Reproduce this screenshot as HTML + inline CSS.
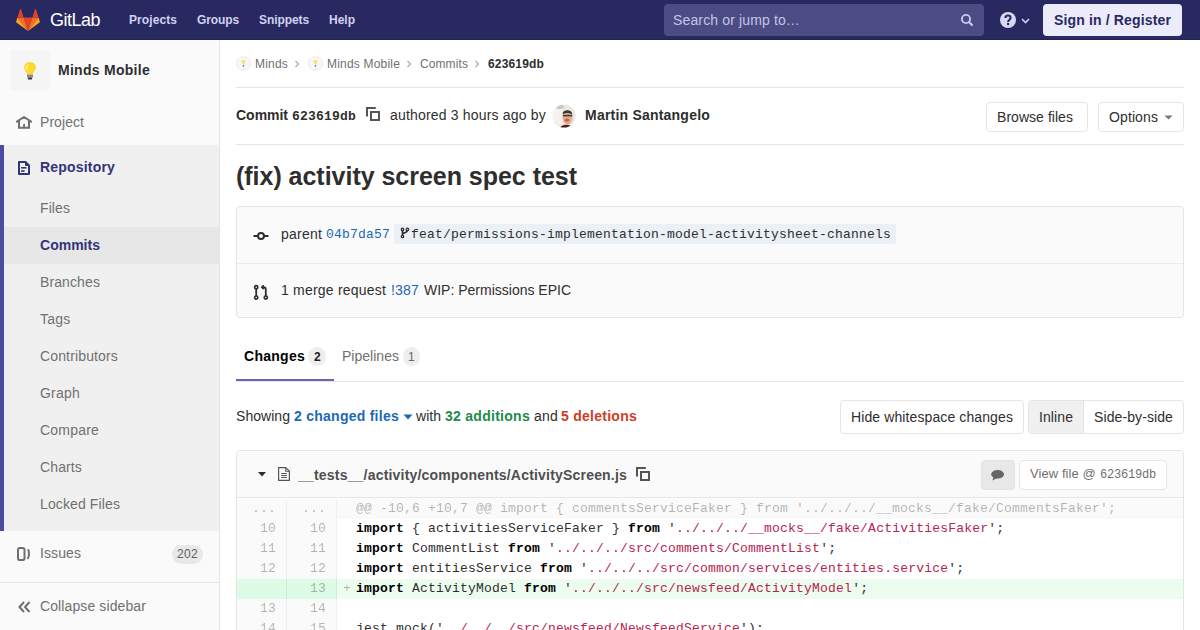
<!DOCTYPE html>
<html><head><meta charset="utf-8">
<style>
*{box-sizing:border-box;margin:0;padding:0}
html,body{width:1200px;height:630px;overflow:hidden;background:#fff;font-family:"Liberation Sans",sans-serif;color:#2e2e2e;font-size:14px}
.a{position:absolute;white-space:pre;line-height:1}
svg{position:absolute;overflow:visible}
.box{position:absolute}
.hl{position:absolute;height:1px;background:#e5e5e5}
.btn{position:absolute;background:#fff;border:1px solid #e5e5e5;border-radius:4px}
.badge{position:absolute;background:#eee;border-radius:10px}
</style></head><body>
<div class="box" style="left:0px;top:0px;width:1200px;height:40px;background:#292961;border-bottom:1px solid #23235c"></div>
<svg style="left:16px;top:9px" width="24" height="22" viewBox="0 0 36 33">
<path fill="#e24329" d="M18 33 L24.6 12.7 H11.4 Z"/>
<path fill="#fc6d26" d="M18 33 L11.4 12.7 H2.2 Z"/>
<path fill="#fca326" d="M2.2 12.7 L0.2 18.9 a1.4 1.4 0 0 0 .5 1.5 L18 33 Z"/>
<path fill="#e24329" d="M2.2 12.7 H11.4 L7.5 0.5 a.7.7 0 0 0 -1.3 0 Z"/>
<path fill="#fc6d26" d="M18 33 L24.6 12.7 H33.8 Z"/>
<path fill="#fca326" d="M33.8 12.7 L35.8 18.9 a1.4 1.4 0 0 1 -.5 1.5 L18 33 Z"/>
<path fill="#e24329" d="M33.8 12.7 H24.6 L28.5 0.5 a.7.7 0 0 1 1.3 0 Z"/>
</svg>
<div class="a" style="left:50px;top:11px;font-size:18px;color:#fff;letter-spacing:-0.5px">GitLab</div>
<div class="a" style="left:129px;top:13.84px;font-size:12px;letter-spacing:0.081px;font-weight:bold;color:#d1d1f0">Projects</div>
<div class="a" style="left:197px;top:13.84px;font-size:12px;letter-spacing:-0.111px;font-weight:bold;color:#d1d1f0">Groups</div>
<div class="a" style="left:259px;top:13.84px;font-size:12px;letter-spacing:-0.084px;font-weight:bold;color:#d1d1f0">Snippets</div>
<div class="a" style="left:329px;top:13.84px;font-size:12px;letter-spacing:-0.001px;font-weight:bold;color:#d1d1f0">Help</div>
<div class="box" style="left:664px;top:4px;width:320px;height:32px;background:#4c4c84;border-radius:4px"></div>
<div class="a" style="left:673px;top:13.15px;font-size:14px;letter-spacing:0.139px;color:#c4c4e4">Search or jump to…</div>
<svg style="left:960px;top:13px" width="14" height="14" viewBox="0 0 14 14"><circle cx="6" cy="6" r="4.1" fill="none" stroke="#c8c8ec" stroke-width="1.9"/><path d="M9 9 L12 12" stroke="#c8c8ec" stroke-width="2.2" stroke-linecap="round"/></svg>
<svg style="left:1000px;top:12px" width="32" height="16" viewBox="0 0 32 16"><circle cx="8" cy="8" r="8" fill="#d8d8f4"/><path d="M5.4 6 C5.4 4.3 6.5 3.5 8 3.5 C9.6 3.5 10.6 4.4 10.6 5.8 C10.6 7.6 8.1 7.8 8.1 10" fill="none" stroke="#292961" stroke-width="2.1"/><rect x="7" y="11" width="2.2" height="2.1" fill="#292961"/><path d="M22 7 L25.5 10.5 L29 7" fill="none" stroke="#d1d1f0" stroke-width="1.6"/></svg>
<div class="box" style="left:1043px;top:4px;width:139px;height:32px;background:#ebebfa;border-radius:4px"></div>
<div class="a" style="left:1054px;top:13.15px;font-size:14px;letter-spacing:0.147px;font-weight:bold;color:#292961">Sign in / Register</div>
<div class="box" style="left:0px;top:40px;width:220px;height:590px;background:#fafafa;border-right:1px solid #e5e5e5"></div>
<div class="box" style="left:10px;top:50px;width:40px;height:40px;background:#f5f5f5;border-radius:4px"></div>
<svg style="left:22px;top:61px" width="16" height="20" viewBox="0 0 16 20">
<path d="M8 1 C3.5 1 1.5 4.5 2.2 7.5 C2.8 10 4.8 11 5 13.5 H11 C11.2 11 13.2 10 13.8 7.5 C14.5 4.5 12.5 1 8 1 Z" fill="#fdd835"/>
<path d="M6 4 C4.5 5 4.3 7 5 8.5" stroke="#fff59d" stroke-width="1.2" fill="none"/>
<rect x="5" y="13.5" width="6" height="3" fill="#8a8a8a"/>
<rect x="5.8" y="16.5" width="4.4" height="2" rx="1" fill="#333"/>
</svg>
<div class="a" style="left:58px;top:63.15px;font-size:14px;letter-spacing:0.278px;font-weight:bold;color:#2e2e2e">Minds Mobile</div>
<svg style="left:16px;top:116px" width="16" height="13" viewBox="0 0 16 13"><path d="M0.9 5.6 L8 1 L15.1 5.6" fill="none" stroke="#707070" stroke-width="2" stroke-linejoin="round" stroke-linecap="round"/><path d="M3 5 V11.7 H13 V5" fill="none" stroke="#707070" stroke-width="2"/><rect x="7.2" y="8" width="1.8" height="4" fill="#707070"/></svg>
<div class="a" style="left:40px;top:115.15px;font-size:14px;letter-spacing:0.061px;color:#707070">Project</div>
<div class="box" style="left:0px;top:145px;width:219px;height:386px;background:#f0f0f0;border-left:4px solid #4b4ba3"></div>
<div class="box" style="left:4px;top:227px;width:215px;height:37px;background:#e7e7e7"></div>
<svg style="left:17px;top:160px" width="14" height="16" viewBox="0 0 14 16"><path d="M2 2 H8.5 L12 5.5 V14 H2 Z" fill="none" stroke="#33337a" stroke-width="2" stroke-linejoin="round"/><path d="M8.5 2 V5.5 H12 Z" fill="#33337a" stroke="#33337a" stroke-width="1"/><rect x="4.1" y="7" width="5.4" height="1.6" fill="#33337a"/><rect x="4.1" y="10.2" width="3.5" height="1.6" fill="#33337a"/></svg>
<div class="a" style="left:40px;top:160.15px;font-size:14px;letter-spacing:0.188px;font-weight:bold;color:#33337a">Repository</div>
<div class="a" style="left:40px;top:201.15px;font-size:14px;letter-spacing:0.088px;color:#707070">Files</div>
<div class="a" style="left:40px;top:238.15px;font-size:14px;letter-spacing:0.015px;font-weight:bold;color:#33337a">Commits</div>
<div class="a" style="left:40px;top:275.15px;font-size:14px;letter-spacing:0.107px;color:#707070">Branches</div>
<div class="a" style="left:40px;top:312.15px;font-size:14px;letter-spacing:0.219px;color:#707070">Tags</div>
<div class="a" style="left:40px;top:349.15px;font-size:14px;letter-spacing:0.145px;color:#707070">Contributors</div>
<div class="a" style="left:40px;top:386.15px;font-size:14px;letter-spacing:0.218px;color:#707070">Graph</div>
<div class="a" style="left:40px;top:423.15px;font-size:14px;letter-spacing:0.203px;color:#707070">Compare</div>
<div class="a" style="left:40px;top:460.15px;font-size:14px;letter-spacing:0.128px;color:#707070">Charts</div>
<div class="a" style="left:40px;top:497.15px;font-size:14px;letter-spacing:0.117px;color:#707070">Locked Files</div>
<svg style="left:17px;top:547px" width="14" height="14" viewBox="0 0 14 14"><rect x="1" y="1" width="6.5" height="12" rx="1.8" fill="none" stroke="#707070" stroke-width="2"/><path d="M11 2.2 C12.4 4.5 12.4 9.5 10.5 12" fill="none" stroke="#707070" stroke-width="2"/></svg>
<div class="a" style="left:40px;top:546.15px;font-size:14px;letter-spacing:0.09px;color:#707070">Issues</div>
<div class="box" style="left:172px;top:545px;width:31px;height:19px;background:#e8e8e8;border-radius:10px"></div>
<div class="a" style="left:177px;top:547.84px;font-size:12px;letter-spacing:0.326px;color:#5e5e5e">202</div>
<div class="box" style="left:0px;top:582px;width:219px;height:1px;background:#e5e5e5"></div>
<svg style="left:18px;top:601px" width="13" height="12" viewBox="0 0 13 12"><path d="M6 1 L1.5 6 L6 11 M11.5 1 L7 6 L11.5 11" fill="none" stroke="#707070" stroke-width="2"/></svg>
<div class="a" style="left:40px;top:599.15px;font-size:14px;letter-spacing:0.107px;color:#707070">Collapse sidebar</div>
<svg style="left:236px;top:56px" width="15" height="15" viewBox="0 0 15 15"><circle cx="7.5" cy="7.5" r="7" fill="#f7f7f7" stroke="#ececec" stroke-width="1"/><path d="M7.5 3.8 C6 3.8 5.3 5 5.7 6.4 C6 7.3 6.6 7.7 6.7 8.6 H8.3 C8.4 7.7 9 7.3 9.3 6.4 C9.7 5 9 3.8 7.5 3.8Z" fill="#f3e27a"/><rect x="6.8" y="9" width="1.4" height="1.6" fill="#777"/></svg>
<div class="a" style="left:255px;top:57.84px;font-size:12px;letter-spacing:0.198px;color:#707070">Minds</div>
<svg style="left:294px;top:60px" width="6" height="8" viewBox="0 0 6 8"><path d="M1.5 1 L4.5 4 L1.5 7" fill="none" stroke="#aaa" stroke-width="1.2"/></svg>
<svg style="left:308px;top:56px" width="15" height="15" viewBox="0 0 15 15"><circle cx="7.5" cy="7.5" r="7" fill="#f7f7f7" stroke="#ececec" stroke-width="1"/><path d="M7.5 3.8 C6 3.8 5.3 5 5.7 6.4 C6 7.3 6.6 7.7 6.7 8.6 H8.3 C8.4 7.7 9 7.3 9.3 6.4 C9.7 5 9 3.8 7.5 3.8Z" fill="#f3e27a"/><rect x="6.8" y="9" width="1.4" height="1.6" fill="#777"/></svg>
<div class="a" style="left:327px;top:57.84px;font-size:12px;letter-spacing:0.192px;color:#707070">Minds Mobile</div>
<svg style="left:406px;top:60px" width="6" height="8" viewBox="0 0 6 8"><path d="M1.5 1 L4.5 4 L1.5 7" fill="none" stroke="#aaa" stroke-width="1.2"/></svg>
<div class="a" style="left:420px;top:57.84px;font-size:12px;letter-spacing:0.095px;color:#707070">Commits</div>
<svg style="left:474px;top:60px" width="6" height="8" viewBox="0 0 6 8"><path d="M1.5 1 L4.5 4 L1.5 7" fill="none" stroke="#aaa" stroke-width="1.2"/></svg>
<div class="a" style="left:488px;top:57.84px;font-size:12px;letter-spacing:0.162px;font-weight:bold;color:#2e2e2e">623619db</div>
<div class="box" style="left:236px;top:87px;width:948px;height:1px;background:#e5e5e5"></div>
<div class="a" style="left:236px;top:108.15px;font-size:14px;letter-spacing:-0.018px;font-weight:bold">Commit</div>
<div class="a" style="left:292px;top:110.04px;font-size:13px;letter-spacing:0.2px;font-family:'Liberation Mono',monospace;font-weight:bold;color:#2e2e2e">623619db</div>
<svg style="left:366px;top:107px" width="14" height="14" viewBox="0 0 14 14"><path d="M1 9.5 V1 H9.8" fill="none" stroke="#555" stroke-width="2"/><rect x="5" y="5" width="8" height="8" fill="none" stroke="#555" stroke-width="2"/></svg>
<div class="a" style="left:390px;top:108.15px;font-size:14px;letter-spacing:0.184px">authored 3 hours ago by</div>
<svg style="left:552px;top:104px" width="24" height="24" viewBox="0 0 24 24">
<defs><clipPath id="av"><circle cx="12" cy="12" r="11.6"/></clipPath><filter id="bl" x="-10%" y="-10%" width="120%" height="120%"><feGaussianBlur stdDeviation="0.6"/></filter></defs>
<g clip-path="url(#av)"><g filter="url(#bl)">
<rect width="24" height="24" fill="#ebe8e4"/>
<ellipse cx="6" cy="12" rx="6" ry="10" fill="#f4f2ef"/>
<ellipse cx="8" cy="3" rx="4" ry="2" fill="#c9c6c2"/>
<ellipse cx="15.5" cy="14" rx="5" ry="6.5" fill="#e2ae92"/>
<path d="M10.5 9.5 C11 7 13.5 6 16 6.2 C18.5 6.5 20.3 8 20.3 10.5 L19 9.8 C17 8.8 13 8.8 11.2 10.2 Z" fill="#3e3632"/>
<path d="M10.8 11.6 H20.3" stroke="#4a3a30" stroke-width="1.6"/>
<ellipse cx="15" cy="16" rx="2.4" ry="1.5" fill="#c8604c"/>
<path d="M8 24 C9 21.5 11.5 20.8 14.5 20.8 C17.5 20.8 19.5 21.5 20 24 Z" fill="#4a1a14"/>
</g></g>
</svg>
<div class="a" style="left:585px;top:108.15px;font-size:14px;letter-spacing:0.215px;font-weight:bold">Martin Santangelo</div>
<div class="btn" style="left:986px;top:102px;width:102px;height:30px"></div>
<div class="a" style="left:997px;top:110.15px;font-size:14px;letter-spacing:0.044px">Browse files</div>
<div class="btn" style="left:1098px;top:102px;width:86px;height:30px"></div>
<div class="a" style="left:1109px;top:110.15px;font-size:14px;letter-spacing:0.107px">Options</div>
<svg style="left:1164px;top:115px" width="9" height="5" viewBox="0 0 9 5"><path d="M0.5 0.5 H8.5 L4.5 4.5 Z" fill="#777"/></svg>
<div class="box" style="left:236px;top:144px;width:948px;height:1px;background:#e5e5e5"></div>
<div class="a" style="left:236px;top:163.83px;font-size:25px;letter-spacing:-0.026px;font-weight:bold;color:#2e2e2e">(fix) activity screen spec test</div>
<div class="box" style="left:236px;top:206px;width:948px;height:112px;background:#fafafa;border:1px solid #e5e5e5;border-radius:4px"></div>
<div class="box" style="left:237px;top:263px;width:946px;height:1px;background:#ebebeb"></div>
<svg style="left:253px;top:231px" width="16" height="10" viewBox="0 0 16 10"><circle cx="8" cy="5" r="3" fill="none" stroke="#2e2e2e" stroke-width="2"/><path d="M0.5 5 H5 M11 5 H15.5" stroke="#2e2e2e" stroke-width="2"/></svg>
<div class="a" style="left:281px;top:227.15px;font-size:14px;letter-spacing:0.217px">parent</div>
<div class="a" style="left:326px;top:228.04px;font-size:13px;letter-spacing:0.2px;font-family:'Liberation Mono',monospace;color:#1b69b6">04b7da57</div>
<div class="box" style="left:394px;top:224px;width:502px;height:20px;background:#eaf0f6;border-radius:2px"></div>
<svg style="left:401px;top:227.7px" width="8" height="10" viewBox="0 0 8 10"><circle cx="1.5" cy="1.4" r="1.2" fill="none" stroke="#2e2e2e" stroke-width="1.3"/><circle cx="6.4" cy="1.4" r="1.2" fill="none" stroke="#2e2e2e" stroke-width="1.3"/><circle cx="1.5" cy="8.5" r="1.2" fill="none" stroke="#2e2e2e" stroke-width="1.3"/><path d="M1.5 2.5 V7.4 M6.4 2.5 C6.4 5 1.8 4.6 1.5 6.5" fill="none" stroke="#2e2e2e" stroke-width="1.6"/></svg>
<div class="a" style="left:411px;top:228.04px;font-size:13px;letter-spacing:0.2px;font-family:'Liberation Mono',monospace;color:#2e2e2e">feat/permissions-implementation-model-activitysheet-channels</div>
<svg style="left:254px;top:285px" width="14" height="15" viewBox="0 0 14 15"><circle cx="2.2" cy="2.2" r="1.6" fill="none" stroke="#2e2e2e" stroke-width="1.7"/><circle cx="2.2" cy="12.6" r="1.6" fill="none" stroke="#2e2e2e" stroke-width="1.7"/><circle cx="11.8" cy="12.6" r="1.6" fill="none" stroke="#2e2e2e" stroke-width="1.7"/><path d="M2.2 3.8 V11 M11.8 11 V4.6 C11.8 3 11 2.2 9.5 2.2 H8 M9.8 0.4 L8 2.2 L9.8 4" fill="none" stroke="#2e2e2e" stroke-width="1.8"/></svg>
<div class="a" style="left:281px;top:283.15px;font-size:14px;letter-spacing:0.204px">1 merge request</div>
<div class="a" style="left:391px;top:283.15px;font-size:14px;letter-spacing:0.188px;color:#1b69b6">!387</div>
<div class="a" style="left:424px;top:283.15px;font-size:14px;letter-spacing:-0.001px">WIP: Permissions EPIC</div>
<div class="a" style="left:244px;top:349.15px;font-size:14px;letter-spacing:0.268px;font-weight:bold;color:#000">Changes</div>
<div class="box" style="left:308px;top:347px;width:18px;height:19px;background:#eee;border-radius:10px"></div>
<div class="a" style="left:314px;top:350.84px;font-size:12px;letter-spacing:0.326px;font-weight:bold;color:#1f1f1f">2</div>
<div class="a" style="left:342px;top:349.15px;font-size:14px;letter-spacing:0.021px;color:#707070">Pipelines</div>
<div class="box" style="left:403px;top:347px;width:17px;height:19px;background:#eee;border-radius:10px"></div>
<div class="a" style="left:408px;top:350.84px;font-size:12px;letter-spacing:0.326px;color:#666">1</div>
<div class="box" style="left:236px;top:379px;width:98px;height:2px;background:#6868b0"></div>
<div class="box" style="left:236px;top:381px;width:948px;height:1px;background:#e5e5e5"></div>
<div class="a" style="left:236px;top:409.15px;font-size:14px;letter-spacing:0.042px">Showing</div>
<div class="a" style="left:294px;top:409.15px;font-size:14px;letter-spacing:0.257px;font-weight:bold;color:#1b69b6">2 changed files</div>
<svg style="left:403px;top:414px" width="10" height="6" viewBox="0 0 10 6"><path d="M0.5 0.5 H9.5 L5 5.5 Z" fill="#1b69b6"/></svg>
<div class="a" style="left:416px;top:409.15px;font-size:14px;letter-spacing:0.026px">with</div>
<div class="a" style="left:445px;top:409.15px;font-size:14px;letter-spacing:0.276px;font-weight:bold;color:#1f8a4c">32 additions</div>
<div class="a" style="left:534px;top:409.15px;font-size:14px;letter-spacing:0.214px">and</div>
<div class="a" style="left:561px;top:409.15px;font-size:14px;letter-spacing:0.261px;font-weight:bold;color:#cf3d27">5 deletions</div>
<div class="btn" style="left:840px;top:400px;width:184px;height:34px"></div>
<div class="a" style="left:851px;top:410.15px;font-size:14px;letter-spacing:0.107px">Hide whitespace changes</div>
<div class="btn" style="left:1028px;top:400px;width:156px;height:34px"></div>
<div class="box" style="left:1029px;top:401px;width:55px;height:32px;background:#f0f0f0;border-right:1px solid #e5e5e5;border-radius:3px 0 0 3px"></div>
<div class="a" style="left:1039px;top:410.15px;font-size:14px;letter-spacing:0.089px">Inline</div>
<div class="a" style="left:1094px;top:410.15px;font-size:14px;letter-spacing:0.099px">Side-by-side</div>
<div class="box" style="left:236px;top:450px;width:948px;height:200px;border:1px solid #e5e5e5;border-radius:4px 4px 0 0;background:#fff"></div>
<div class="box" style="left:237px;top:451px;width:946px;height:47px;background:#fafafa;border-bottom:1px solid #e5e5e5;border-radius:3px 3px 0 0"></div>
<svg style="left:258px;top:472px" width="8" height="4.5" viewBox="0 0 8 4.5"><path d="M0 0 H8 L4 4.5 Z" fill="#2e2e2e"/></svg>
<svg style="left:278px;top:467px" width="12" height="14" viewBox="0 0 12 14"><path d="M0.6 0.6 H7.8 L11.4 4.2 V13.4 H0.6 Z" fill="none" stroke="#555" stroke-width="1.2" stroke-linejoin="round"/><path d="M7.8 0.6 V4.2 H11.4" fill="none" stroke="#555" stroke-width="1.1"/><path d="M3.2 6.5 H8.9 M3.2 8.5 H8.9 M3.2 10.5 H8.9" stroke="#555" stroke-width="1"/></svg>
<div class="a" style="left:298px;top:468.15px;font-size:14px;letter-spacing:0.196px;font-weight:bold;color:#4f4f4f">__tests__/activity/components/ActivityScreen.js</div>
<svg style="left:636px;top:467px" width="14" height="14" viewBox="0 0 14 14"><path d="M1 9.5 V1 H9.8" fill="none" stroke="#555" stroke-width="2"/><rect x="5" y="5" width="8" height="8" fill="none" stroke="#555" stroke-width="2"/></svg>
<div class="box" style="left:981px;top:460px;width:34px;height:30px;background:#e8e8e8;border:1px solid #e3e3e3;border-radius:4px"></div>
<svg style="left:991px;top:470px" width="14" height="11" viewBox="0 0 14 11"><ellipse cx="6.6" cy="4.2" rx="6.4" ry="4.3" fill="#666"/><path d="M3 6.5 L1.2 10.6 L6.5 8 Z" fill="#666"/></svg>
<div class="btn" style="left:1019px;top:460px;width:148px;height:30px"></div>
<div class="a" style="left:1030px;top:466.99px;font-size:13px;letter-spacing:0.071px;color:#707070">View file @</div>
<div class="a" style="left:1100px;top:468.81px;font-size:12px;letter-spacing:-0.2px;font-family:'Liberation Mono',monospace;color:#707070">623619db</div>
<div class="box" style="left:237px;top:499px;width:50px;height:20px;background:#fafafa;border-right:1px solid #f0f0f0"></div>
<div class="box" style="left:287px;top:499px;width:50px;height:20px;background:#fafafa;border-right:1px solid #f0f0f0"></div>
<div class="box" style="left:337px;top:499px;width:846px;height:20px;background:#fafafa"></div>
<div class="a" style="left:237px;top:499px;width:50px;height:20px;line-height:20px;text-align:right;padding-right:11px;font-family:'Liberation Mono',monospace;font-size:13px;letter-spacing:0.2px;color:rgba(0,0,0,.3)">...</div>
<div class="a" style="left:287px;top:499px;width:50px;height:20px;line-height:20px;text-align:right;padding-right:11px;font-family:'Liberation Mono',monospace;font-size:13px;letter-spacing:0.2px;color:rgba(0,0,0,.3)">...</div>
<div class="a" style="left:356px;top:499px;line-height:20px;font-family:'Liberation Mono',monospace;font-size:13px;letter-spacing:0.2px;color:rgba(0,0,0,.3)">@@ -10,6 +10,7 @@ import { commentsServiceFaker } from '../../../__mocks__/fake/CommentsFaker';</div>
<div class="box" style="left:237px;top:519px;width:50px;height:20px;background:#fafafa;border-right:1px solid #f0f0f0"></div>
<div class="box" style="left:287px;top:519px;width:50px;height:20px;background:#fafafa;border-right:1px solid #f0f0f0"></div>
<div class="box" style="left:337px;top:519px;width:846px;height:20px;background:#fff"></div>
<div class="a" style="left:237px;top:519px;width:50px;height:20px;line-height:20px;text-align:right;padding-right:11px;font-family:'Liberation Mono',monospace;font-size:13px;letter-spacing:0.2px;color:rgba(0,0,0,.3)">10</div>
<div class="a" style="left:287px;top:519px;width:50px;height:20px;line-height:20px;text-align:right;padding-right:11px;font-family:'Liberation Mono',monospace;font-size:13px;letter-spacing:0.2px;color:rgba(0,0,0,.3)">10</div>
<div class="a" style="left:356px;top:519px;line-height:20px;font-family:'Liberation Mono',monospace;font-size:13px;letter-spacing:0.2px;color:#2e2e2e"><b style="color:#000">import</b> { activitiesServiceFaker } <b style="color:#000">from</b> '<span style="color:#b8234f">../../../__mocks__/fake/ActivitiesFaker</span>';</div>
<div class="box" style="left:237px;top:539px;width:50px;height:20px;background:#fafafa;border-right:1px solid #f0f0f0"></div>
<div class="box" style="left:287px;top:539px;width:50px;height:20px;background:#fafafa;border-right:1px solid #f0f0f0"></div>
<div class="box" style="left:337px;top:539px;width:846px;height:20px;background:#fff"></div>
<div class="a" style="left:237px;top:539px;width:50px;height:20px;line-height:20px;text-align:right;padding-right:11px;font-family:'Liberation Mono',monospace;font-size:13px;letter-spacing:0.2px;color:rgba(0,0,0,.3)">11</div>
<div class="a" style="left:287px;top:539px;width:50px;height:20px;line-height:20px;text-align:right;padding-right:11px;font-family:'Liberation Mono',monospace;font-size:13px;letter-spacing:0.2px;color:rgba(0,0,0,.3)">11</div>
<div class="a" style="left:356px;top:539px;line-height:20px;font-family:'Liberation Mono',monospace;font-size:13px;letter-spacing:0.2px;color:#2e2e2e"><b style="color:#000">import</b> CommentList <b style="color:#000">from</b> '<span style="color:#b8234f">../../../src/comments/CommentList</span>';</div>
<div class="box" style="left:237px;top:559px;width:50px;height:20px;background:#fafafa;border-right:1px solid #f0f0f0"></div>
<div class="box" style="left:287px;top:559px;width:50px;height:20px;background:#fafafa;border-right:1px solid #f0f0f0"></div>
<div class="box" style="left:337px;top:559px;width:846px;height:20px;background:#fff"></div>
<div class="a" style="left:237px;top:559px;width:50px;height:20px;line-height:20px;text-align:right;padding-right:11px;font-family:'Liberation Mono',monospace;font-size:13px;letter-spacing:0.2px;color:rgba(0,0,0,.3)">12</div>
<div class="a" style="left:287px;top:559px;width:50px;height:20px;line-height:20px;text-align:right;padding-right:11px;font-family:'Liberation Mono',monospace;font-size:13px;letter-spacing:0.2px;color:rgba(0,0,0,.3)">12</div>
<div class="a" style="left:356px;top:559px;line-height:20px;font-family:'Liberation Mono',monospace;font-size:13px;letter-spacing:0.2px;color:#2e2e2e"><b style="color:#000">import</b> entitiesService <b style="color:#000">from</b> '<span style="color:#b8234f">../../../src/common/services/entities.service</span>';</div>
<div class="box" style="left:237px;top:579px;width:50px;height:20px;background:#ddfbe6;border-right:1px solid #c7f0d2"></div>
<div class="box" style="left:287px;top:579px;width:50px;height:20px;background:#ddfbe6;border-right:1px solid #c7f0d2"></div>
<div class="box" style="left:337px;top:579px;width:846px;height:20px;background:#ecfdf0"></div>
<div class="a" style="left:287px;top:579px;width:50px;height:20px;line-height:20px;text-align:right;padding-right:11px;font-family:'Liberation Mono',monospace;font-size:13px;letter-spacing:0.2px;color:rgba(0,0,0,.3)">13</div>
<div class="a" style="left:343px;top:579px;line-height:20px;font-family:'Liberation Mono',monospace;font-size:13px;color:rgba(0,0,0,.3)">+</div>
<div class="a" style="left:356px;top:579px;line-height:20px;font-family:'Liberation Mono',monospace;font-size:13px;letter-spacing:0.2px;color:#2e2e2e"><b style="color:#000">import</b> ActivityModel <b style="color:#000">from</b> '<span style="color:#b8234f">../../../src/newsfeed/ActivityModel</span>';</div>
<div class="box" style="left:237px;top:599px;width:50px;height:20px;background:#fafafa;border-right:1px solid #f0f0f0"></div>
<div class="box" style="left:287px;top:599px;width:50px;height:20px;background:#fafafa;border-right:1px solid #f0f0f0"></div>
<div class="box" style="left:337px;top:599px;width:846px;height:20px;background:#fff"></div>
<div class="a" style="left:237px;top:599px;width:50px;height:20px;line-height:20px;text-align:right;padding-right:11px;font-family:'Liberation Mono',monospace;font-size:13px;letter-spacing:0.2px;color:rgba(0,0,0,.3)">13</div>
<div class="a" style="left:287px;top:599px;width:50px;height:20px;line-height:20px;text-align:right;padding-right:11px;font-family:'Liberation Mono',monospace;font-size:13px;letter-spacing:0.2px;color:rgba(0,0,0,.3)">14</div>
<div class="box" style="left:237px;top:619px;width:50px;height:20px;background:#fafafa;border-right:1px solid #f0f0f0"></div>
<div class="box" style="left:287px;top:619px;width:50px;height:20px;background:#fafafa;border-right:1px solid #f0f0f0"></div>
<div class="box" style="left:337px;top:619px;width:846px;height:20px;background:#fff"></div>
<div class="a" style="left:237px;top:619px;width:50px;height:20px;line-height:20px;text-align:right;padding-right:11px;font-family:'Liberation Mono',monospace;font-size:13px;letter-spacing:0.2px;color:rgba(0,0,0,.3)">14</div>
<div class="a" style="left:287px;top:619px;width:50px;height:20px;line-height:20px;text-align:right;padding-right:11px;font-family:'Liberation Mono',monospace;font-size:13px;letter-spacing:0.2px;color:rgba(0,0,0,.3)">15</div>
<div class="a" style="left:356px;top:619px;line-height:20px;font-family:'Liberation Mono',monospace;font-size:13px;letter-spacing:0.2px;color:#2e2e2e">jest.mock('<span style="color:#b8234f">../../../src/newsfeed/NewsfeedService</span>');</div>
</body></html>
